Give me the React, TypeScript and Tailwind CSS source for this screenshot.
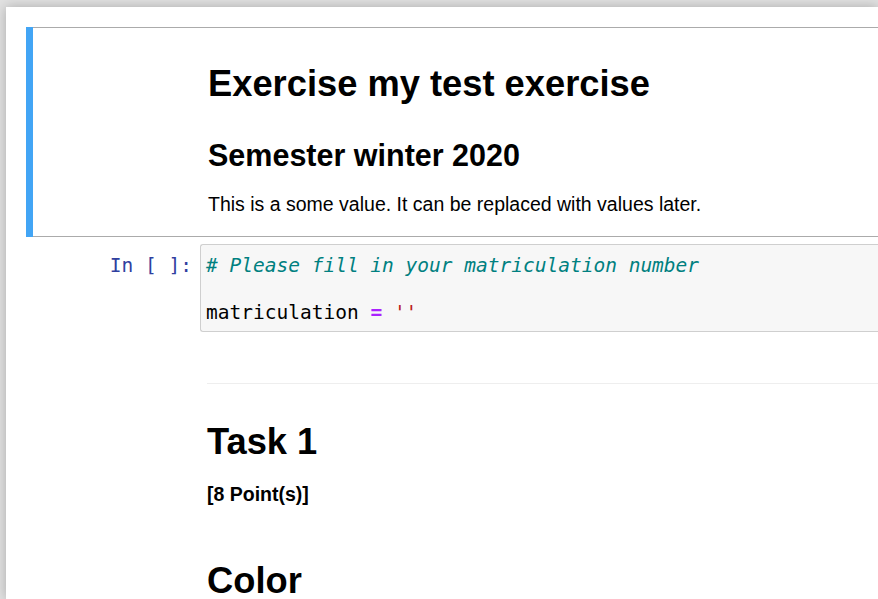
export default function App() {
  const sans = "font-['Liberation_Sans',Arial,sans-serif]";
  const mono = "font-['DejaVu_Sans_Mono',monospace]";

  return (
    <div className="h-[599px] w-[878px] overflow-hidden bg-[#e2e2e2] pl-[6px] pt-[7px]">
      <div className={`h-full bg-white pl-[20px] pt-[20px] text-black shadow-[0_0_12px_rgba(0,0,0,0.25)] ${sans}`}>
        {/* selected markdown cell */}
        <div className="border-l-[7px] border-[#42a5f5]">
          <div className="h-[210px] border-y border-[#ababab] pl-[175px]">
            <h1 className="mt-[38px] text-[36.3px] leading-none font-bold">Exercise my test exercise</h1>
            <h2 className="mt-[38px] text-[30.5px] leading-none font-bold">Semester winter 2020</h2>
            <p className="mt-[24px] text-[19.5px] leading-none">
              This is a some value. It can be replaced with values later.
            </p>
          </div>
        </div>

        {/* code cell */}
        <div className={`mt-[7px] flex ${mono}`}>
          <div className="w-[174px] shrink-0 pt-[10px] pr-[8px] text-right text-[19.5px] leading-[23.6px] text-[#303f9f]">
            In [ ]:
          </div>
          <div className="h-[88px] flex-1 rounded-l-[3px] border border-r-0 border-[#cfcfcf] bg-[#f7f7f7] px-[5px] pt-[9px] text-[19.5px] leading-[23.6px]">
            <div className="italic text-[#008080]"># Please fill in your matriculation number</div>
            <div>&nbsp;</div>
            <div>
              matriculation <span className="font-bold text-[#aa22ff]">=</span>{" "}
              <span className="text-[#ba2121]">''</span>
            </div>
          </div>
        </div>

        {/* markdown cell */}
        <div className="pl-[181px] pt-[51px]">
          <hr className="border-t border-[#eeeeee]" />
          <h1 className="mt-[40px] text-[36.3px] leading-none font-bold">Task 1</h1>
          <p className="mt-[25px] text-[19.5px] leading-none font-bold">[8 Point(s)]</p>
          <h1 className="mt-[58px] text-[36.3px] leading-none font-bold">Color</h1>
        </div>
      </div>
    </div>
  );
}
